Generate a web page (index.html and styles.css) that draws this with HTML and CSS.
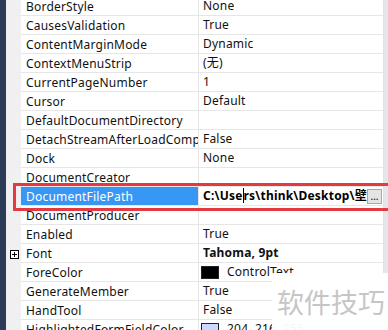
FILE: index.html
```html
<!DOCTYPE html>
<html lang="zh-CN">
<head>
    <meta charset="UTF-8">
    <title>属性</title>
    <link rel="stylesheet" href="styles.css">
</head>
<body>

    <div class="ide">
        <div class="edge"></div>
        <div class="grid">
            <div class="row"><span class="exp"></span><span class="name">BorderStyle</span><span class="val">None</span></div>
            <div class="row"><span class="exp"></span><span class="name">CausesValidation</span><span class="val">True</span></div>
            <div class="row"><span class="exp"></span><span class="name">ContentMarginMode</span><span class="val">Dynamic</span></div>
            <div class="row"><span class="exp"></span><span class="name">ContextMenuStrip</span><span class="val">(无)</span></div>
            <div class="row"><span class="exp"></span><span class="name">CurrentPageNumber</span><span class="val">1</span></div>
            <div class="row"><span class="exp"></span><span class="name">Cursor</span><span class="val">Default</span></div>
            <div class="row"><span class="exp"></span><span class="name">DefaultDocumentDirectory</span><span class="val"></span></div>
            <div class="row"><span class="exp"></span><span class="name">DetachStreamAfterLoadComplete</span><span class="val">False</span></div>
            <div class="row"><span class="exp"></span><span class="name">Dock</span><span class="val">None</span></div>
            <div class="row"><span class="exp"></span><span class="name">DocumentCreator</span><span class="val"></span></div>
            <div class="row selected">
                <span class="exp"></span>
                <span class="name">DocumentFilePath</span>
                <span class="val edit">
                    <span class="path">C:\Use<i class="caret"></i>rs\think\Desktop\壁纸\a.pdf</span>
                    <button class="dots">...</button>
                </span>
            </div>
            <div class="row"><span class="exp"></span><span class="name">DocumentProducer</span><span class="val"></span></div>
            <div class="row"><span class="exp"></span><span class="name">Enabled</span><span class="val">True</span></div>
            <div class="row"><span class="exp"><i class="plus"></i></span><span class="name">Font</span><span class="val bold">Tahoma, 9pt</span></div>
            <div class="row"><span class="exp"></span><span class="name">ForeColor</span><span class="val"><i class="swatch black"></i>ControlText</span></div>
            <div class="row"><span class="exp"></span><span class="name">GenerateMember</span><span class="val">True</span></div>
            <div class="row"><span class="exp"></span><span class="name">HandTool</span><span class="val">False</span></div>
            <div class="row"><span class="exp"></span><span class="name">HighlightedFormFieldColor</span><span class="val"><i class="swatch blue"></i>204, 216, 255</span></div>
        </div>
        <div class="scroll"></div>
    </div>

    <!-- marco rojo sobre la fila seleccionada -->
    <div class="mark"></div>

    <div class="watermark">软件技巧</div>

</body>
</html>
```

FILE: styles.css
```css
body {
    margin: 0;
    width: 388px;
    height: 330px;
    overflow: hidden;
    background: #fff;
    font-family: "Noto Sans", "Noto Sans CJK SC", sans-serif;
    font-size: 12px;
    color: #111;
    position: relative;
}

.ide {
    display: flex;
    height: 330px;
}

.edge {
    width: 6px;
    background: #2b3b58;
}

.grid {
    flex: 1;
    margin-top: -3px;
    background: #f0f0f0;
    border-right: 1px solid #e2e2e2;
}

.scroll {
    width: 4px;
    background: #e6e6ea;
}

.row {
    display: grid;
    grid-template-columns: 15px 178px 1fr;
    height: 19px;
    line-height: 20px;
}

.exp {
    background: #f0f0f0;
    position: relative;
}

.name,
.val {
    background: #fff;
    border-bottom: 1px solid #e6e6e6;
    white-space: nowrap;
    overflow: hidden;
    letter-spacing: 0.2px;
}

.name {
    padding-left: 5px;
    border-right: 1px solid #e6e6e6;
}

.val {
    padding-left: 4px;
    display: flex;
    align-items: center;
}

.bold {
    font-weight: bold;
}

.selected .name {
    background: #3797f5;
    color: #fff;
}

.edit {
    padding-right: 1px;
}

.path {
    flex: 1;
    overflow: hidden;
    font-weight: bold;
    color: #000;
}

.caret {
    display: inline-block;
    width: 1px;
    height: 15px;
    background: #000;
    vertical-align: -3px;
}

.dots {
    width: 15px;
    height: 15px;
    padding: 0;
    border: 1px solid #a8a8a8;
    background: #e4e4e4;
    font-family: "Noto Sans", sans-serif;
    font-size: 10px;
    line-height: 8px;
    letter-spacing: 0;
    color: #000;
}

.plus {
    position: absolute;
    left: 4px;
    top: 6px;
    width: 7px;
    height: 7px;
    border: 1px solid #000;
    background: #fff;
}

.plus::before,
.plus::after {
    content: "";
    position: absolute;
    background: #000;
}

.plus::before {
    left: 1px;
    top: 3px;
    width: 5px;
    height: 1px;
}

.plus::after {
    left: 3px;
    top: 1px;
    width: 1px;
    height: 5px;
}

.swatch {
    display: inline-block;
    width: 18px;
    height: 13px;
    margin: 0 8px 0 -2px;
    box-sizing: border-box;
    border: 1px solid #222;
}

.swatch.black {
    background: #000;
}

.swatch.blue {
    background: #ccd8ff;
}

.mark {
    position: absolute;
    left: 13px;
    top: 183px;
    width: 380px;
    height: 22px;
    border: 3px solid #e23a40;
}

.watermark {
    position: absolute;
    left: 272px;
    top: 273px;
    width: 116px;
    height: 57px;
    background: rgba(255, 255, 255, 0.96);
    color: #c6c6c6;
    font-family: "Noto Sans CJK SC", sans-serif;
    font-size: 27px;
    line-height: 57px;
    padding-left: 5px;
    box-sizing: border-box;
}
```
